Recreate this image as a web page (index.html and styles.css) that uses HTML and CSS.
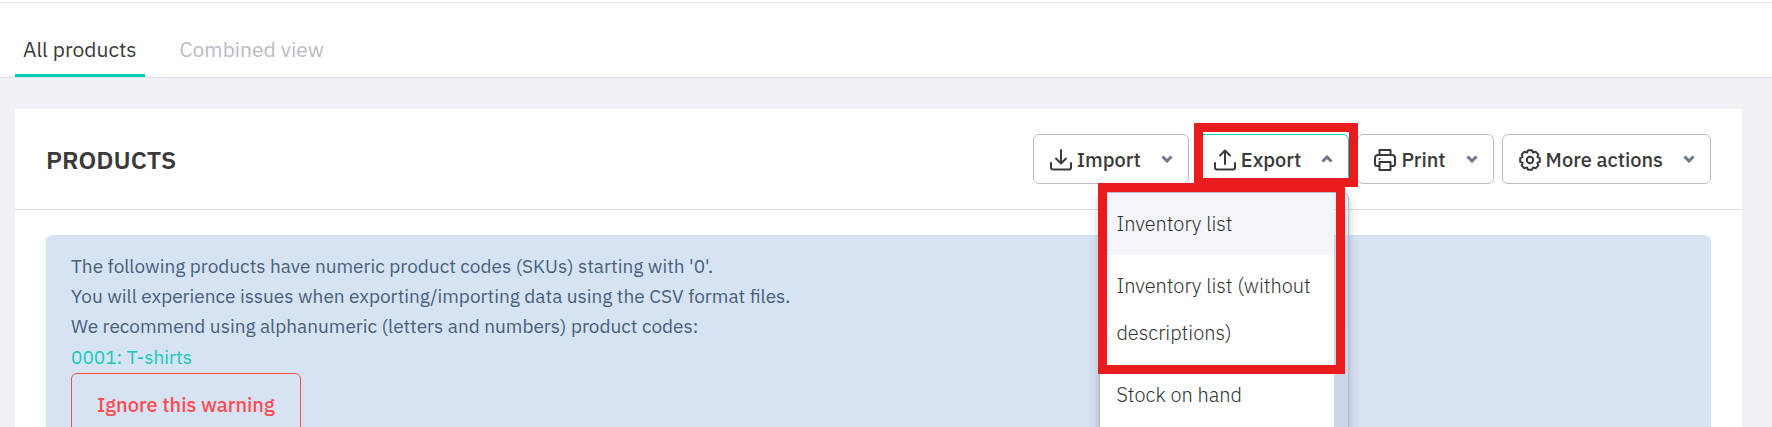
FILE: index.html
```html
<!DOCTYPE html>
<html lang="en">
<head>
<meta charset="utf-8">
<title>Products</title>
<link rel="stylesheet" href="styles.css">
</head>
<body>
<nav class="tabs">
  <a class="tab tab-active" href="#all">All products</a>
  <a class="tab" href="#combined">Combined view</a>
</nav>
<main class="panel">
  <header class="panel-header">
    <h1 class="title">PRODUCTS</h1>
    <div class="actions">
      <button class="action" type="button">
        <svg class="icon" viewBox="0 0 22 22"><path d="M11 1v13M6 9.500l5 5 5-5M1 14v4.500q0 2 2 2h16q2 0 2-2V14"/></svg>
        <span class="label">Import</span>
        <svg class="chevron" viewBox="0 0 12 8"><path d="M1.500 1.500 6 6l4.500-4.500"/></svg>
      </button>
      <div class="dropdown">
        <button class="action action-open" type="button" aria-expanded="true">
          <svg class="icon" viewBox="0 0 22 22"><path d="M11 15V1.500M6 6.500l5-5 5 5M1 14v4.500q0 2 2 2h16q2 0 2-2V14"/></svg>
          <span class="label">Export</span>
          <svg class="chevron" viewBox="0 0 12 8"><path d="M1.500 6.500 6 2l4.500 4.500"/></svg>
        </button>
        <div class="menu">
          <div class="menu-items">
            <a class="item item-current" href="#inventory">Inventory list</a>
            <a class="item" href="#inventory-short">Inventory list (without descriptions)</a>
            <a class="item" href="#stock">Stock on hand</a>
          </div>
          <div class="menu-thumb"></div>
        </div>
        <div class="mark mark-menu"></div>
        <div class="mark mark-button"></div>
      </div>
      <button class="action" type="button">
        <svg class="icon" viewBox="0 0 22 22"><path d="M5.500 6V1h11v5M5.500 17H3q-2 0-2-2V9q0-3 3-3h14q3 0 3 3v6q0 2-2 2h-2.500M5.500 13h11v8h-11z"/><circle class="dot" cx="5.500" cy="10" r="1"/></svg>
        <span class="label">Print</span>
        <svg class="chevron" viewBox="0 0 12 8"><path d="M1.500 1.500 6 6l4.500-4.500"/></svg>
      </button>
      <button class="action" type="button">
        <svg class="icon" viewBox="0 0 22 22"><path d="M20.800 12.900 18.400 14 19.300 16.600 16.600 19.300 14 18.400 12.900 20.800H9.100L8 18.400 5.400 19.300 2.700 16.600 3.600 14 1.200 12.900V9.100L3.600 8 2.700 5.400 5.400 2.700 8 3.600 9.100 1.200h3.800L14 3.600l2.600-.9 2.700 2.700L18.400 8l2.400 1.100z"/><circle cx="11" cy="11" r="3.200"/></svg>
        <span class="label">More actions</span>
        <svg class="chevron" viewBox="0 0 12 8"><path d="M1.500 1.500 6 6l4.500-4.500"/></svg>
      </button>
    </div>
  </header>
  <section class="alert">
    <p class="alert-text">The following products have numeric product codes (SKUs) starting with '0'.</p>
    <p class="alert-text">You will experience issues when exporting/importing data using the CSV format files.</p>
    <p class="alert-text">We recommend using alphanumeric (letters and numbers) product codes:</p>
    <a class="alert-link" href="#0001">0001: T-shirts</a>
    <button class="ignore" type="button">Ignore this warning</button>
  </section>
</main>
</body>
</html>
```
FILE: styles.css
```css
* { box-sizing: border-box; }
body {
  margin: 0;
  height: 100vh;
  overflow: hidden;
  background: #f0f1f4;
  color: #3a3a3a;
  font: 20px/30px "IBM Plex Sans", Roboto, sans-serif;
}
a { text-decoration: none; }
.tabs {
  display: flex;
  gap: 20px;
  padding: 22px 15px 0;
  height: 78px;
  background: #fff;
  border-bottom: 1px solid #dddfe4;
  box-shadow: inset 0 2px #fff, inset 0 3px #dfe0e8;
  font-size: 21px;
}
.tab {
  padding: 12px 8px 0;
  color: #b9bbc4;
}
.tab + .tab { padding-left: 15px; }
.tab-active {
  color: #3a3a3a;
  border-bottom: 3px solid #00ccbe;
}
.panel {
  margin: 31px 30px 0 15px;
  background: #fff;
}
.panel-header {
  display: flex;
  justify-content: space-between;
  align-items: center;
  padding: 25px 31px;
  border-bottom: 1px solid #dcdee2;
}
.title {
  margin: 0;
  padding-top: 2px;
  font-size: 25px;
  font-weight: 600;
}
.actions { display: flex; gap: 8px; }
.action {
  display: flex;
  align-items: center;
  height: 50px;
  padding: 2px 15px 0 16px;
  background: #fff;
  border: 1px solid #b9bace;
  border-radius: 6px;
  color: #3a3a3a;
  font: inherit;
  font-weight: 500;
}
.action-open { border-color: #00ccbe; }
.label { margin: 0 20px 0 5px; }
.icon {
  width: 22px;
  height: 22px;
  fill: none;
  stroke: #3a3a3a;
  stroke-width: 2;
  stroke-linejoin: round;
  stroke-linecap: round;
}
.dot { fill: #3a3a3a; stroke: none; }
.chevron {
  width: 12px;
  height: 8px;
  margin-bottom: 3px;
  fill: none;
  stroke: #6f7888;
  stroke-width: 3;
}
.dropdown { position: relative; }
.menu {
  position: absolute;
  top: 58px;
  right: 0;
  z-index: 1;
  width: 250px;
  height: 300px;
  padding-right: 14px;
  background: rgba(110, 120, 140, .1);
  border: 1px solid #b9bace;
  border-radius: 6px;
  box-shadow: 0 3px 8px rgba(50, 60, 90, .3);
}
.menu-items {
  height: 100%;
  background: #fff;
  border-radius: 6px;
}
.menu-thumb {
  position: absolute;
  top: 14px;
  right: 2px;
  width: 10px;
  height: 120px;
  background: rgba(150, 160, 180, .15);
}
.item {
  display: block;
  padding: 7px 16px 8px;
  line-height: 47px;
  font-weight: 300;
  color: #303030;
}
.item-current { background: #f4f5fb; border-radius: 6px; }
.mark {
  position: absolute;
  z-index: 2;
  border: 9px solid #e81c1c;
  pointer-events: none;
}
.mark-button { inset: -11px -9px -3px -3px; }
.mark-menu {
  top: 49px;
  right: 4px;
  width: 247px;
  height: 191px;
}
.alert {
  margin: 25px 31px;
  padding: 16px 25px;
  background: #d6e3f3;
  border-radius: 6px;
  color: #48607c;
  font-size: 19px;
}
.alert-text { margin: 0; }
.alert-link { display: block; padding: 1px 0; color: #14c8be; }
.ignore {
  height: 64px;
  padding: 0 25px;
  background: transparent;
  border: 1px solid #ff4c52;
  border-radius: 6px;
  color: #ff4c52;
  font: inherit;
  font-size: 20px;
  font-weight: 500;
}
```
